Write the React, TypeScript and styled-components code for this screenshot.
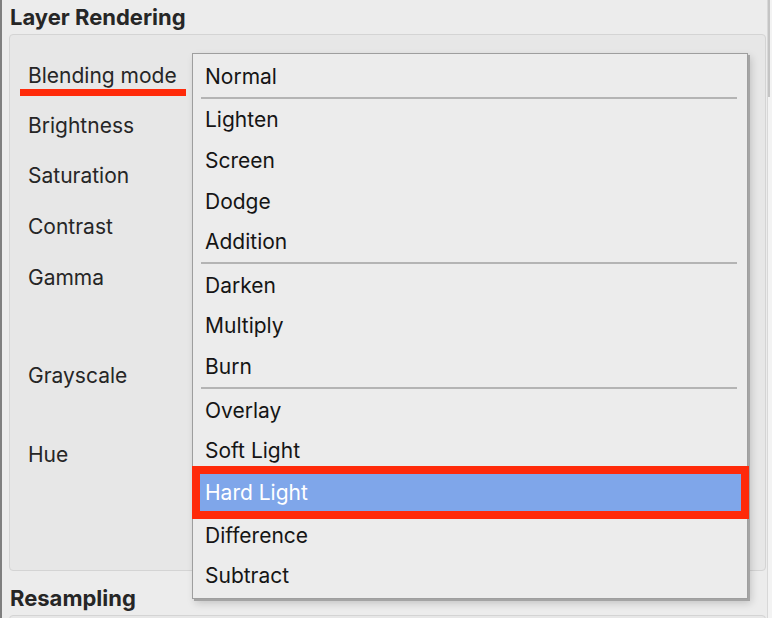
import React from "react";
import styled, { createGlobalStyle } from "styled-components";

const GlobalStyle = createGlobalStyle`
	html, body {
		margin: 0;
		padding: 0;
		background: #ececec;
	}
	body {
		font-family: Inter, "Liberation Sans", Arial, sans-serif;
		-webkit-font-smoothing: antialiased;
	}
`;

type Entry = { label?: string; sep?: boolean; active?: boolean };

const entries: Entry[] = [
	{ label: "Normal" },
	{ sep: true },
	{ label: "Lighten" },
	{ label: "Screen" },
	{ label: "Dodge" },
	{ label: "Addition" },
	{ sep: true },
	{ label: "Darken" },
	{ label: "Multiply" },
	{ label: "Burn" },
	{ sep: true },
	{ label: "Overlay" },
	{ label: "Soft Light" },
	{ label: "Hard Light", active: true },
	{ label: "Difference" },
	{ label: "Subtract" },
];

const rows = [
	{ label: "Blending mode", gap: 0, marked: true },
	{ label: "Brightness", gap: 10 },
	{ label: "Saturation", gap: 10 },
	{ label: "Contrast", gap: 11 },
	{ label: "Gamma", gap: 11 },
	{ label: "Grayscale", gap: 58 },
	{ label: "Hue", gap: 39 },
];

const App = (): JSX.Element => {
	return (
		<Page>
			<GlobalStyle />
			<Content>
				<SectionTitle>Layer Rendering</SectionTitle>
				<GroupBox>
					<Form>
						{rows.map((r) => (
							<FieldRow key={r.label} gap={r.gap}>
								<FieldLabel marked={r.marked}>{r.label}</FieldLabel>
							</FieldRow>
						))}
					</Form>
				</GroupBox>
				<SectionTitle spaced>Resampling</SectionTitle>
				<NextBox />
				<Popup>
					{entries.map((e, i) =>
						e.sep ? (
							<Separator key={i} />
						) : e.active ? (
							<ActiveItem key={i}>
								<ActiveBar>{e.label}</ActiveBar>
							</ActiveItem>
						) : (
							<MenuItem key={i}>{e.label}</MenuItem>
						)
					)}
				</Popup>
			</Content>
			<ScrollTrack>
				<ScrollThumb />
			</ScrollTrack>
		</Page>
	);
};

export default App;

const Page = styled.div`
	width: 772px;
	height: 618px;
	overflow: hidden;
	display: flex;
	background: #ececec;
`;

const Content = styled.div`
	position: relative;
	flex: 1;
	display: flex;
	flex-direction: column;
	border-left: 2px solid #7f7f7f;
	padding-right: 1px;
`;

const SectionTitle = styled.div<{ spaced?: boolean }>`
	flex: none;
	height: 34px;
	line-height: 34px;
	padding-left: 8px;
	margin-top: ${(p) => (p.spaced ? "10px" : "0")};
	font-size: 22px;
	font-weight: 700;
	color: #262626;
`;

const GroupBox = styled.div`
	flex: none;
	margin-left: 7px;
	height: 537px;
	box-sizing: border-box;
	border: 1px solid #d4d4d4;
	border-radius: 4px;
	background: #e7e7e7;
`;

const NextBox = styled.div`
	flex: none;
	margin-left: 7px;
	height: 20px;
	border: 1px solid #d4d4d4;
	border-radius: 4px;
	background: #e7e7e7;
`;

const Form = styled.div`
	display: flex;
	flex-direction: column;
	padding: 20px 0 0 18px;
`;

const FieldRow = styled.div<{ gap: number }>`
	height: 40px;
	margin-top: ${(p) => p.gap}px;
	display: flex;
	align-items: center;
`;

const FieldLabel = styled.div<{ marked?: boolean }>`
	position: relative;
	font-size: 21px;
	color: #262626;
	&::after {
		content: "";
		display: ${(p) => (p.marked ? "block" : "none")};
		position: absolute;
		left: -8px;
		top: 26px;
		width: 166px;
		height: 7px;
		background: #ff2a0a;
	}
`;

const Popup = styled.div`
	position: absolute;
	left: 190px;
	top: 53px;
	width: 554px;
	height: 542px;
	padding-top: 2px;
	box-sizing: content-box;
	background: #ececec;
	border: 1px solid #9e9e9e;
	box-shadow: 2px 2px 0 #a4a4a4, 3px 4px 8px rgba(0, 0, 0, 0.18);
	display: flex;
	flex-direction: column;
`;

const MenuItem = styled.div`
	height: 40.6px;
	flex: none;
	display: flex;
	align-items: center;
	padding-left: 12px;
	font-size: 21px;
	color: #151515;
`;

const Separator = styled.div`
	height: 3px;
	flex: none;
	margin: 0 10px 0 8px;
	display: flex;
	align-items: center;
	&::before {
		content: "";
		flex: 1;
		height: 2px;
		background: #b4b4b4;
	}
`;

const ActiveItem = styled.div`
	height: 44px;
	flex: none;
	display: flex;
	align-items: center;
	padding: 0 6px 0 7px;
`;

const ActiveBar = styled.div`
	flex: 1;
	height: 37px;
	display: flex;
	align-items: center;
	padding-left: 5px;
	background: #7fa6ea;
	color: #ffffff;
	font-size: 21px;
	outline: 8px solid #ff2a0a;
`;

const ScrollTrack = styled.div`
	width: 4px;
	flex: none;
	background: #f3f3f3;
	border-left: 1px solid #d8d8d8;
`;

const ScrollThumb = styled.div`
	width: 2px;
	height: 97px;
	background: #c4c4c4;
`;
